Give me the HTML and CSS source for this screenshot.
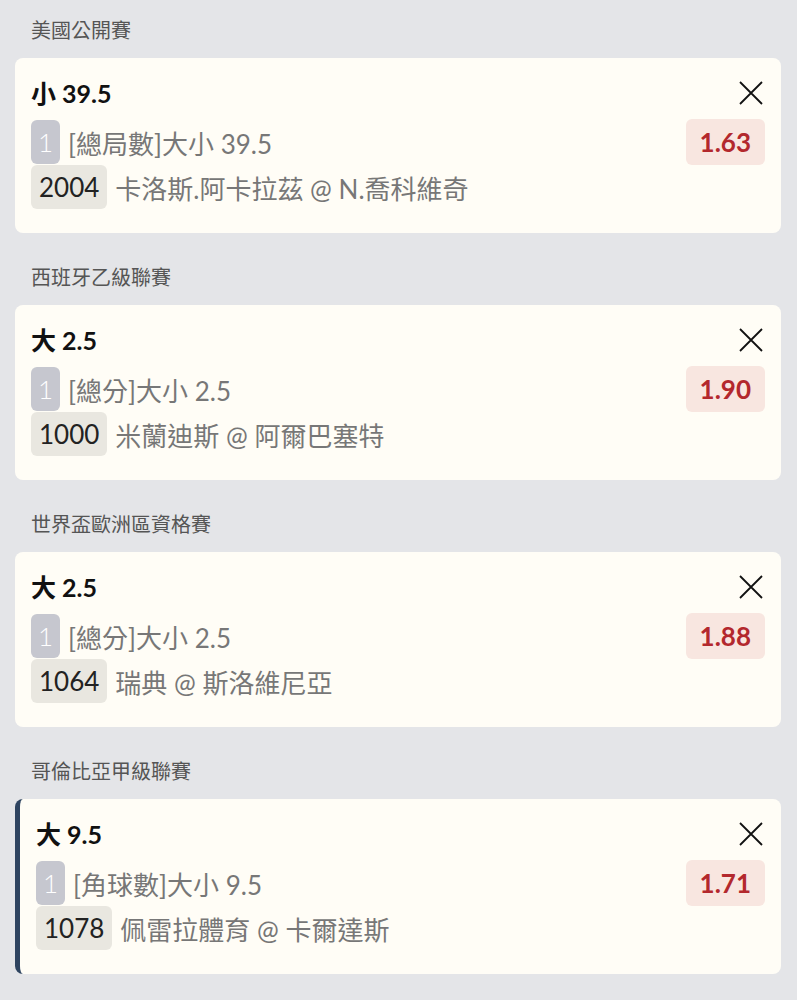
FILE: index.html
```html
<!DOCTYPE html>
<html lang="zh-Hant">
<head>
    <meta charset="UTF-8">
    <meta name="viewport" content="width=device-width, initial-scale=1.0">
    <title>投注單</title>
    <link rel="stylesheet" href="styles.css">
</head>
<body>
    <div class="slip">
        <div class="league">美國公開賽</div>
        <div class="bet">
            <div class="bet-head">
                <div class="bet-title">小 39.5</div>
                <button class="remove" aria-label="移除">
                    <svg viewBox="0 0 24 24" width="24" height="24"><path d="M1 1L23 23M23 1L1 23" stroke="#111" stroke-width="1.8" fill="none"/></svg>
                </button>
            </div>
            <div class="bet-row">
                <span class="num">1</span>
                <span class="market">[總局數]大小 39.5</span>
                <span class="odds">1.63</span>
            </div>
            <div class="bet-row">
                <span class="code">2004</span>
                <span class="match">卡洛斯.阿卡拉茲 @ N.喬科維奇</span>
            </div>
        </div>

        <div class="league">西班牙乙級聯賽</div>
        <div class="bet">
            <div class="bet-head">
                <div class="bet-title">大 2.5</div>
                <button class="remove" aria-label="移除">
                    <svg viewBox="0 0 24 24" width="24" height="24"><path d="M1 1L23 23M23 1L1 23" stroke="#111" stroke-width="1.8" fill="none"/></svg>
                </button>
            </div>
            <div class="bet-row">
                <span class="num">1</span>
                <span class="market">[總分]大小 2.5</span>
                <span class="odds">1.90</span>
            </div>
            <div class="bet-row">
                <span class="code">1000</span>
                <span class="match">米蘭迪斯 @ 阿爾巴塞特</span>
            </div>
        </div>

        <div class="league">世界盃歐洲區資格賽</div>
        <div class="bet">
            <div class="bet-head">
                <div class="bet-title">大 2.5</div>
                <button class="remove" aria-label="移除">
                    <svg viewBox="0 0 24 24" width="24" height="24"><path d="M1 1L23 23M23 1L1 23" stroke="#111" stroke-width="1.8" fill="none"/></svg>
                </button>
            </div>
            <div class="bet-row">
                <span class="num">1</span>
                <span class="market">[總分]大小 2.5</span>
                <span class="odds">1.88</span>
            </div>
            <div class="bet-row">
                <span class="code">1064</span>
                <span class="match">瑞典 @ 斯洛維尼亞</span>
            </div>
        </div>

        <div class="league">哥倫比亞甲級聯賽</div>
        <div class="bet active">
            <div class="bet-head">
                <div class="bet-title">大 9.5</div>
                <button class="remove" aria-label="移除">
                    <svg viewBox="0 0 24 24" width="24" height="24"><path d="M1 1L23 23M23 1L1 23" stroke="#111" stroke-width="1.8" fill="none"/></svg>
                </button>
            </div>
            <div class="bet-row">
                <span class="num">1</span>
                <span class="market">[角球數]大小 9.5</span>
                <span class="odds">1.71</span>
            </div>
            <div class="bet-row">
                <span class="code">1078</span>
                <span class="match">佩雷拉體育 @ 卡爾達斯</span>
            </div>
        </div>
    </div>
</body>
</html>
```

FILE: styles.css
```css
body {
    margin: 0;
    background-color: #e4e5e8;
    font-family: Lato, "Noto Sans CJK TC", sans-serif;
    color: #111;
}
.slip {
    padding: 0 16px 20px 15px;
}
.league {
    padding: 18px 16px 16px;
    font-size: 20px;
    line-height: 24px;
    color: #555;
}
.league ~ .league {
    padding-top: 32px;
}
.bet {
    background-color: #fffdf6;
    border-radius: 8px;
    padding: 20px 16px 23px;
}
.bet.active {
    border-left: 5px solid #2e4460;
    padding-left: 16px;
}
.bet-head {
    display: flex;
    justify-content: space-between;
    align-items: center;
    height: 30px;
    margin-bottom: 12px;
}
.bet-title {
    font-size: 25px;
    font-weight: bold;
    line-height: 30px;
}
.remove {
    border: none;
    background: none;
    padding: 0;
    margin-right: 2px;
    display: flex;
}
.bet-row {
    display: flex;
    align-items: center;
    gap: 8px;
    height: 44px;
    font-size: 26px;
    margin-bottom: 1px;
}
.num {
    background-color: #c6c7cf;
    color: #fff;
    border-radius: 6px;
    padding: 0 7px;
    line-height: 44px;
    font-weight: 300;
}
.code {
    background-color: #e9e7e0;
    color: #222;
    border-radius: 6px;
    padding: 0 8px;
    line-height: 44px;
}
.market, .match {
    color: #777;
}
.odds {
    margin-left: auto;
    background-color: #f8e6e0;
    color: #b3282d;
    font-weight: bold;
    border-radius: 6px;
    padding: 0 14px;
    line-height: 46px;
}
```
